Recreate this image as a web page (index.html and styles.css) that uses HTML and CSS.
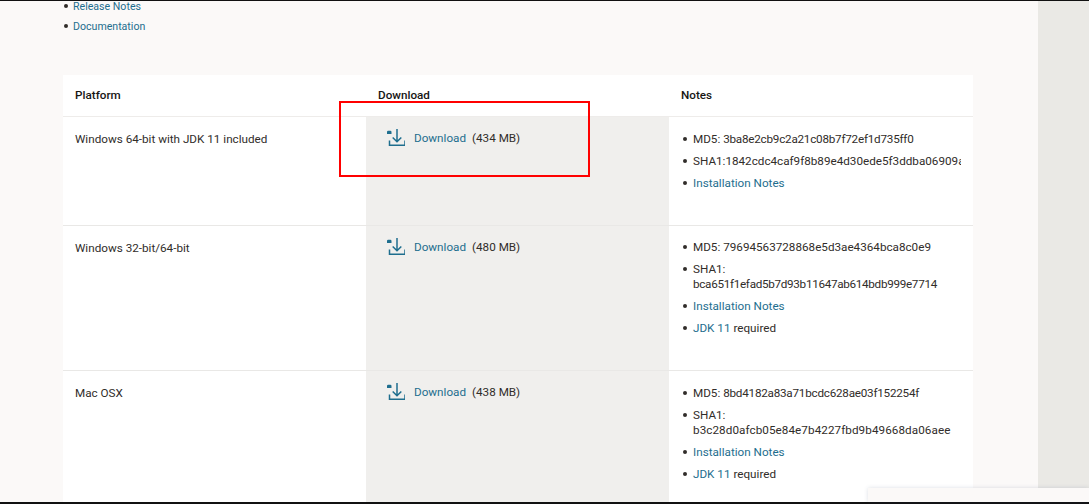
FILE: index.html
```html
<!DOCTYPE html>
<html lang="en">
<head>
<meta charset="utf-8">
<title>Downloads</title>
<link rel="stylesheet" href="styles.css">
</head>
<body>
<div class="frame">
  <div class="page">
    <main class="content">
      <ul class="links">
        <li><a href="#">Release Notes</a></li>
        <li><a href="#">Documentation</a></li>
      </ul>
      <table class="downloads">
        <colgroup><col class="c1"><col class="c2"><col class="c3"></colgroup>
        <thead>
          <tr><th>Platform</th><th>Download</th><th>Notes</th></tr>
        </thead>
        <tbody>
          <tr class="r1">
            <td>Windows 64-bit with JDK 11 included</td>
            <td class="dl"><span class="dl-line"><svg class="icon" viewBox="0 0 18 18"><path d="M0 3a1.200 1.200 0 0 1 1.200-1.200h2.100A1.200 1.200 0 0 1 4.500 3v2H0z" fill="#1e6e8e"/><path d="M10 0v12.500M5.700 8.500l4.300 4.300 4.300-4.300M2.500 11.500V16.300H18V11.500" fill="none" stroke="#1e6e8e" stroke-width="1.500"/></svg><a href="#">Download</a><span class="size">(434 MB)</span></span></td>
            <td class="notes"><ul>
              <li>MD5: <span class="snug">3ba8e2cb9c2a21c08b7f72ef1d735ff0</span></li>
              <li class="clip">SHA1:1842cdc4caf9f8b89e4d30ede5f3ddba06909a6</li>
              <li><a href="#">Installation Notes</a></li>
            </ul></td>
          </tr>
          <tr class="r2">
            <td>Windows 32-bit/64-bit</td>
            <td class="dl"><span class="dl-line"><svg class="icon" viewBox="0 0 18 18"><path d="M0 3a1.200 1.200 0 0 1 1.200-1.200h2.100A1.200 1.200 0 0 1 4.500 3v2H0z" fill="#1e6e8e"/><path d="M10 0v12.500M5.700 8.500l4.300 4.300 4.300-4.300M2.500 11.500V16.300H18V11.500" fill="none" stroke="#1e6e8e" stroke-width="1.500"/></svg><a href="#">Download</a><span class="size">(480 MB)</span></span></td>
            <td class="notes"><ul>
              <li>MD5: 79694563728868e5d3ae4364bca8c0e9</li>
              <li>SHA1:<br><span class="tight">bca651f1efad5b7d93b11647ab614bdb999e7714</span></li>
              <li><a href="#">Installation Notes</a></li>
              <li><a href="#">JDK 11</a> required</li>
            </ul></td>
          </tr>
          <tr class="r3">
            <td>Mac OSX</td>
            <td class="dl"><span class="dl-line"><svg class="icon" viewBox="0 0 18 18"><path d="M0 3a1.200 1.200 0 0 1 1.200-1.200h2.100A1.200 1.200 0 0 1 4.500 3v2H0z" fill="#1e6e8e"/><path d="M10 0v12.500M5.700 8.500l4.300 4.300 4.300-4.300M2.500 11.500V16.300H18V11.500" fill="none" stroke="#1e6e8e" stroke-width="1.500"/></svg><a href="#">Download</a><span class="size">(438 MB)</span></span></td>
            <td class="notes"><ul>
              <li>MD5: <span class="snug">8bd4182a83a71bcdc628ae03f152254f</span></li>
              <li>SHA1:<br><span class="loose">b3c28d0afcb05e84e7b4227fbd9b49668da06aee</span></li>
              <li><a href="#">Installation Notes</a></li>
              <li><a href="#">JDK 11</a> required</li>
            </ul></td>
          </tr>
        </tbody>
      </table>
    </main>
    <aside class="gutter"></aside>
  </div>
  <div class="highlight"></div>
  <div class="corner-panel"></div>
</div>
</body>
</html>
```
FILE: styles.css
```css
* { box-sizing: border-box; }
html, body { margin: 0; height: 100%; overflow: hidden; }
body { background: #111; font-family: Roboto, sans-serif; font-size: 11.7px; color: #312d2a; }
.frame { position: relative; height: 504px; padding: 1px 0 2px; }
.page { display: flex; height: 501px; overflow: hidden; background: #fbf9f8; }
.content { width: 1038px; padding-left: 63px; }
.gutter { flex: 1; background: #eae9e5; }
a { color: #1e6e8e; text-decoration: none; }
.links { margin: 0; padding: 0 0 0 10px; height: 74px; list-style: none; font-size: 10.6px; }
.links li { position: relative; height: 19.5px; line-height: 12px; }
.links li::before, .notes li::before { content: ""; position: absolute; width: 4px; height: 4px; border-radius: 50%; background: #312d2a; }
.links li::before { left: -9px; top: 3px; }
.downloads { width: 910px; border-collapse: collapse; table-layout: fixed; background: #fff; }
.c1, .c2 { width: 303px; }
th { height: 41px; padding: 0 0 0 12px; text-align: left; font-weight: 500; color: #161513; border-bottom: 1px solid #eeecea; }
td { padding: 0 0 0 12px; vertical-align: top; border-bottom: 1px solid #e9e8e6; }
tbody td { padding-top: 14px; line-height: 16px; }
.r1 td { height: 109px; }
.r2 td { height: 145px; }
.r3 td { height: 145px; }
tbody td.dl { background: #f0efed; padding: 12px 0 0 21px; }
.dl-line { display: flex; align-items: flex-start; }
.icon { width: 18px; height: 18px; margin-right: 9px; flex: none; }
.dl-line a, .size { margin-top: 1px; }
.size { margin-left: 6px; }
tbody td.notes { padding: 15px 12px 0 24px; }
tbody .r2 td.notes { padding-top: 14px; }
.notes ul { margin: 0; padding: 0; list-style: none; }
.notes li { position: relative; margin-bottom: 7px; line-height: 15px; }
.notes li::before { left: -10px; top: 5px; }
.notes li.clip { white-space: nowrap; clip-path: inset(0 0 0 -14px); width: 268px; }
.tight { letter-spacing: -0.3px; }
.snug { letter-spacing: -0.23px; }
.loose { letter-spacing: 0.07px; }
.highlight { position: absolute; left: 339px; top: 101px; width: 251px; height: 76px; border: 2px solid #f00; }
.corner-panel { position: absolute; left: 868px; top: 488px; right: 0; height: 14px; background: #fbf9f8; box-shadow: 0 0 4px rgba(60, 80, 110, .18); }
```
